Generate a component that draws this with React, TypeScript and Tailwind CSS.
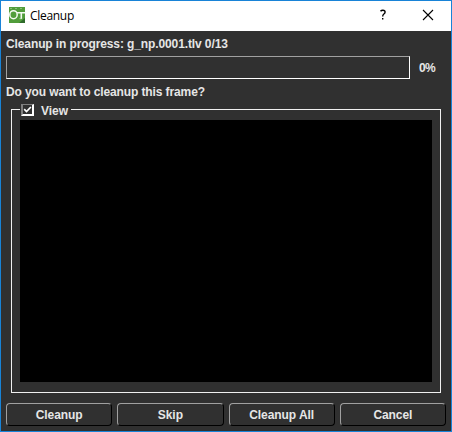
import React from 'react';

function Logo() {
  return (
    <svg width="16" height="16" viewBox="0 0 16 16" className="block">
      <rect width="16" height="16" fill="#519d3b" />
      <path d="M1 1.5H3M6 1.5H8M11 1.5H13" stroke="#8abf78" strokeWidth="1" />
      <path d="M10 16L16 11V16Z" fill="#2f6b2b" />
      <ellipse cx="4.5" cy="7.7" rx="3.7" ry="4" fill="none" stroke="#f4faf2" strokeWidth="1.5" />
      <path d="M8 5.7H16M12.3 5.7V12" fill="none" stroke="#f4faf2" strokeWidth="1.6" />
      <path d="M10.5 11.7H12.5" stroke="#b5d8aa" strokeWidth="1" />
    </svg>
  );
}

function TitleBar() {
  return (
    <header className="flex h-[30px] shrink-0 items-center bg-white pl-2 font-normal text-black">
      <div className="-mt-[2px]"><Logo /></div>
      <span className="ml-[5px] font-['Open_Sans','Noto_Sans',sans-serif] text-[12px] leading-4 tracking-[-0.3px]">Cleanup</span>
      <button className="ml-auto flex h-full w-[46px] items-center justify-center pb-[2px] pl-[2px]" aria-label="Help">
        <svg width="8" height="12" viewBox="0 0 8 12" fill="none" stroke="#000" strokeWidth="1.4">
          <path d="M1.5 2.2Q2.4 1.2 3.9 1.2Q6.1 1.2 6.1 3Q6.1 4.2 4.9 5Q3.7 5.8 3.7 7.4M3.7 9V10.6" />
        </svg>
      </button>
      <button className="flex h-full w-[46px] items-center justify-center pb-[2px]" aria-label="Close">
        <svg width="12" height="12" viewBox="0 0 12 12" stroke="#000" strokeWidth="1.1">
          <path d="M1 1L11 11M11 1L1 11" />
        </svg>
      </button>
    </header>
  );
}

function DialogButton({ label }: { label: string }) {
  return (
    <button className="h-[23px] flex-1 rounded-[4px] border border-t-[#a0a0a0] border-r-black border-b-black border-l-[#a0a0a0] bg-[#303030] pt-px text-center leading-[21px] tracking-[-0.06px]">
      {label}
    </button>
  );
}

export default function App() {
  return (
    <div className="flex h-[432px] w-[452px] flex-col border border-[#1883d7] bg-[#303030] font-['Liberation_Sans',Arial,sans-serif] text-[12px] font-bold text-[#e6e6e6]">
      <TitleBar />
      <main className="flex flex-1 flex-col px-[5px]">
        <p className="mt-[5px] h-4 leading-4 tracking-[-0.11px]">Cleanup in progress: g_np.0001.tlv 0/13</p>
        <div className="mt-1 flex h-[23px] items-center">
          <div className="h-[23px] w-[404px] border border-t-[#a0a0a0] border-r-white border-b-white border-l-[#a0a0a0]" />
          <span className="ml-[9px] tracking-[-0.6px]">0%</span>
        </div>
        <p className="mt-[5px] h-4 leading-4 tracking-[-0.11px]">Do you want to cleanup this frame?</p>
        <section className="mx-[5px] mt-[9px] h-[284px] border border-[#f0f0f0] px-2">
          <label className="-mt-[7px] flex h-[17px] w-fit items-start bg-[#303030] pl-px pr-[2px]">
            <span className="mt-px flex h-3 w-[13px] items-center justify-center border border-t-[#808080] border-r-2 border-r-white border-b-2 border-b-white border-l-2 border-l-[#808080] bg-[#303030]">
              <svg width="9" height="9" viewBox="0 0 9 9" className="shrink-0" fill="none" stroke="#fff" strokeWidth="1.7">
                <path d="M1.2 4.2L3.5 6.5L7.9 2" />
              </svg>
            </span>
            <span className="ml-[7px] pr-px leading-[17px]">View</span>
          </label>
          <div className="h-[262px] bg-black" />
        </section>
        <footer className="mt-[10px] flex gap-[5px]">
          <DialogButton label="Cleanup" />
          <DialogButton label="Skip" />
          <DialogButton label="Cleanup All" />
          <DialogButton label="Cancel" />
        </footer>
      </main>
    </div>
  );
}
